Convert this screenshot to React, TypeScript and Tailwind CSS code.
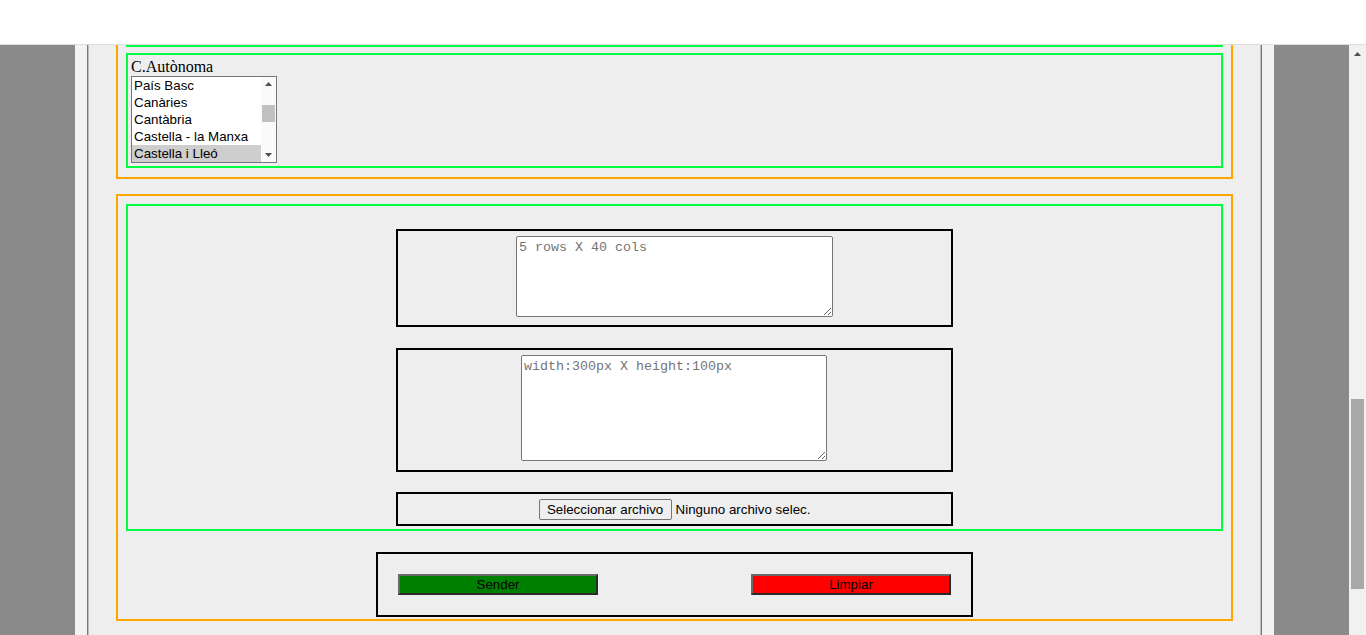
import React from 'react';

const regions = ['País Basc', 'Canàries', 'Cantàbria', 'Castella - la Manxa', 'Castella i Lleó'];
const selectedRegion = 'Castella i Lleó';

function Arrow({ up, size = 7 }: { up?: boolean; size?: number }) {
  return (
    <svg width={size} height={4} viewBox="0 0 7 4" className="block">
      <polygon points={up ? '3.5,0 7,4 0,4' : '0,0 7,0 3.5,4'} fill="#505050" />
    </svg>
  );
}

function ListBox() {
  return (
    <div className="flex w-[146px] h-[87px] border border-[#767676] bg-white overflow-hidden">
      <div className="flex-1 flex flex-col">
        {regions.map((r) => (
          <div
            key={r}
            className={`h-[17px] shrink-0 leading-[17px] pl-[2px] text-black whitespace-nowrap ${
              r === selectedRegion ? 'bg-[#cecece]' : ''
            }`}
          >
            {r}
          </div>
        ))}
      </div>
      {/* listbox scrollbar */}
      <div className="w-[15px] flex flex-col items-center bg-[#fafafa]">
        <div className="h-[14px] flex items-center justify-center">
          <Arrow up />
        </div>
        <div className="mt-[14px] w-[13px] h-[17px] bg-[#c1c1c1]" />
        <div className="flex-1" />
        <div className="h-[14px] flex items-center justify-center">
          <Arrow />
        </div>
      </div>
    </div>
  );
}

export default function App() {
  return (
    <div className="h-screen flex flex-col overflow-hidden bg-white font-['Liberation_Sans',Arial,sans-serif] text-[13.333px] text-black">
      {/* Top bar */}
      <header className="h-[45px] shrink-0 bg-white border-b border-[#dedede]" />

      <div className="flex flex-1 min-h-0">
        <main className="flex-1 bg-[#8a8a8a] overflow-hidden">
          <div className="w-[1199px] h-full mx-auto bg-[#f2f2f2] px-[12px]">
            <div className="h-full bg-[#eeeeee] border-x border-[#777] shadow-[inset_1px_0_0_#bdbdbd,inset_-1px_0_0_#bdbdbd] px-[28px]">
              {/* Section 1 (scrolled, top is out of view) */}
              <section className="border-2 border-t-0 border-[#ffa500] px-[8px] pb-[9px]">
                <div className="border-2 border-t-0 border-[#00ff40]" />
                <div className="mt-[6px] border-2 border-[#00ff40] p-[3px]">
                  <label className="block font-['Liberation_Serif','Times_New_Roman',serif] text-[16px] leading-[18px]">
                    C.Autònoma
                  </label>
                  <ListBox />
                </div>
              </section>

              {/* Section 2 */}
              <section className="mt-[15px] border-2 border-[#ffa500] px-[8px] pt-[8px] pb-[2px]">
                <div className="border-2 border-[#00ff40] pt-[23px] pb-[3px] flex flex-col items-center">
                  <div className="w-[557px] border-2 border-black pt-[5px] pb-[8px] flex justify-center">
                    <textarea
                      placeholder="5 rows X 40 cols"
                      className="block w-[317px] h-[81px] bg-white border border-[#767676] rounded-[2px] p-[2px] pt-[3px] font-['Liberation_Mono','DejaVu_Sans_Mono',monospace] text-[13.333px] leading-[15px] resize placeholder:text-[#757575]"
                    />
                  </div>
                  <div className="mt-[21px] w-[557px] border-2 border-black pt-[5px] pb-[9px] pr-px flex justify-center">
                    <textarea
                      placeholder="width:300px X height:100px"
                      className="block w-[306px] h-[106px] bg-white border border-[#767676] rounded-[2px] p-[2px] pt-[3px] font-['Liberation_Mono','DejaVu_Sans_Mono',monospace] text-[13.333px] leading-[15px] resize placeholder:text-[#757575]"
                    />
                  </div>
                  <div className="mt-[20px] w-[557px] border-2 border-black pt-[5px] pb-[4px] flex justify-center items-center">
                    <button className="w-[133px] h-[21px] bg-[#efefef] border border-[#767676] rounded-[2px] leading-[19px] text-center">
                      Seleccionar archivo
                    </button>
                    <span className="ml-[4px]">Ninguno archivo selec.</span>
                  </div>
                </div>

                <div className="mt-[21px] mx-auto w-[597px] border-2 border-black p-[20px] flex justify-between">
                  <button className="w-[200px] h-[21px] bg-[#008000] border-2 border-[#6a6a6a] border-b-[#2a2a2a] border-r-[#2a2a2a] leading-[17px] text-center">
                    Sender
                  </button>
                  <button className="w-[200px] h-[21px] bg-[#ff0000] border-2 border-[#6a6a6a] border-b-[#2a2a2a] border-r-[#2a2a2a] leading-[17px] text-center">
                    Limpiar
                  </button>
                </div>
              </section>
            </div>
          </div>
        </main>

        {/* Page scrollbar */}
        <div className="w-[17px] shrink-0 bg-[#f1f1f1] flex flex-col items-center">
          <div className="h-[17px] flex items-center justify-center">
            <Arrow up />
          </div>
          <div className="mt-[337px] w-[13px] h-[190px] bg-[#a8a8a8]" />
        </div>
      </div>
    </div>
  );
}
